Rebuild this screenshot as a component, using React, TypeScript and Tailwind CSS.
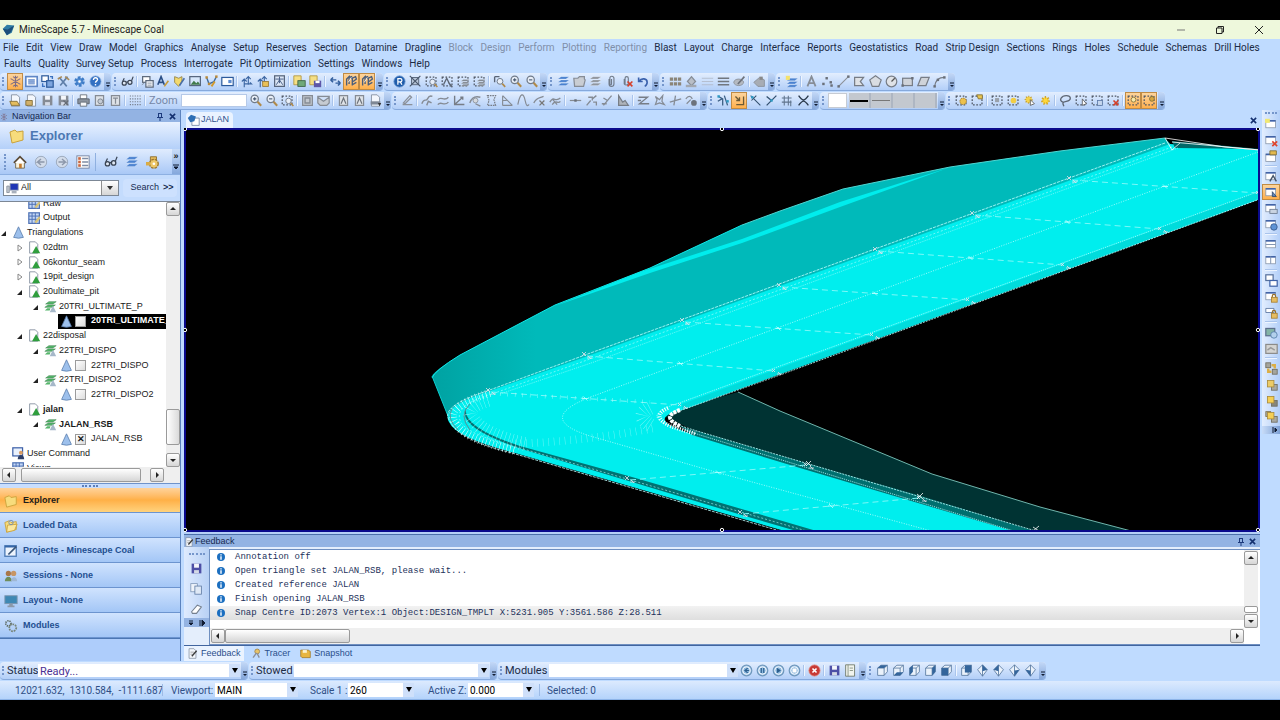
import { useState } from "react";
import type { ReactNode } from "react";

const NAVY = "#2c5a9c";
const GREY = "#868c95";

const windowFrame = (
  <>
    <rect x="1" y="3" width="12" height="9" fill="#fff" stroke="#8a97ab" />
    <path d="M1 3.5h12" stroke="#3f63a8" strokeWidth="2" />
  </>
);
const sheet = (
  <path d="M3 1h7l3 3v11H3z" fill="#f4f7fc" stroke="#7a8698" />
);
const greySheet = (
  <path d="M3 2h10v12H3z" fill="#dfe3e8" stroke={GREY} strokeWidth="1.5" />
);
const marquee = (
  <rect
    x="1.5"
    y="2.5"
    width="12"
    height="11"
    fill="none"
    stroke="#4d5563"
    strokeWidth="1.5"
    strokeDasharray="2 2"
  />
);
const lens = (
  <>
    <circle cx="7" cy="6" r="4.5" fill="#e8eef7" stroke="#6f7a8a" strokeWidth="1.5" />
    <path d="M10.500 9.500l4.500 5" stroke="#b08a4a" strokeWidth="2.500" />
  </>
);
const folder = (
  <path d="M1 4l5-2 2 2 6-1v9l-11 3z" fill="#f7dc7c" stroke="#c9a23c" />
);
const floppy = (color: string) => (
  <>
    <path d="M2 2h12v12H2z" fill={color} />
    <path d="M5 2h6v5H5z" fill="#f5f7fb" />
    <path d="M5 10h6v4H5z" fill="#d4dae6" />
  </>
);
const cube = (
  <path
    d="M2 5l4-3.500h8v8L10 14H2zM2 5h8v9M10 5l4-3.500"
    fill="#eaf2fb"
    stroke="#54759c"
  />
);
const diamond = (
  <path d="M8 1l6 6-6 8-6-8zM8 1v14" fill="#eaf2fb" stroke="#54759c" />
);
const disc = (color: string) => (
  <>
    <circle cx="8" cy="8" r="6.500" fill="#b7d3ee" stroke={color} strokeWidth="1.500" />
    <circle cx="8" cy="8" r="4.500" fill="#8db8de" stroke="#fff" />
  </>
);
const stack = (color: string) => (
  <>
    <path d="M1 13l4-3h10l-4 3zM1 9l4-3h10l-4 3zM1 5l4-3h10l-4 3z" fill={color} stroke="#fff" strokeWidth=".3" />
  </>
);
const padlock = (
  <>
    <path d="M9 9V7.500a2 2 0 014 0V9" fill="none" stroke="#97712c" strokeWidth="1.500" />
    <rect x="8" y="9" width="7" height="6" fill="#e6bd61" stroke="#a67e2e" />
  </>
);
const line = (d: string, color = GREY, width = 1.7) => (
  <path d={d} fill="none" stroke={color} strokeWidth={width} />
);
const nodes = (points: number[][], color = "#6a7079") =>
  points.map(([x, y]) => (
    <rect key={`${x}-${y}`} x={x - 1.5} y={y - 1.5} width="3" height="3" fill={color} />
  ));
const squares = (front: string, back: string, both = false) => (
  <>
    {both && <rect x="1" y="2" width="6" height="6" fill={back} stroke="#7d7049" />}
    <rect x="8" y="8" width="7" height="7" fill={back} stroke="#6d6a5c" />
    <rect x="3" y="3" width="8" height="8" fill={front} stroke="#a88a3a" />
  </>
);

const icons: Record<string, ReactNode> = {
  snow: line("M8 1v14M2 4.500l12 7M14 4.500l-12 7M5 2l3 2 3-2M5 14l3-2 3 2", "#7d6c86", 1.3),
  panel: (
    <>
      <rect x="1" y="2" width="14" height="12" fill="#fff" stroke="#5f86c6" strokeWidth="2" />
      <path d="M4 5h8v6H4z" fill="#9bb7e3" />
      <path d="M4 6h8M4 8.500h8M4 11h8" stroke="#6c8cc4" />
    </>
  ),
  windows: (
    <>
      <rect x="1" y="1" width="8" height="7" fill="#fff" stroke={NAVY} strokeWidth="1.500" />
      <rect x="7" y="7" width="8" height="8" fill="#7da5df" stroke={NAVY} strokeWidth="1.500" />
      {line("M11 2h3v3M2 10v4h3", "#3b72c0")}
    </>
  ),
  tools: (
    <>
      {line("M3 3l9 11M13 2L4 13", "#5f7fa9", 2)}
      {line("M1 5l5-3M10 2l5 4", "#a78a5a", 2)}
    </>
  ),
  gear: (
    <>
      <circle cx="8" cy="8" r="4.500" fill="#5b93d6" stroke="#3f7cc6" strokeWidth="4" strokeDasharray="3 1.700" />
      <circle cx="8" cy="8" r="1.500" fill="#fff" />
    </>
  ),
  help: (
    <>
      <circle cx="8" cy="8" r="7" fill="#3370c2" stroke="#a9c4e8" />
      {line("M5.500 6c0-4 5-3 5-.500 0 2-2.500 2-2.500 4M8 11v2", "#fff")}
    </>
  ),
  glasses: (
    <>
      <circle cx="4" cy="10" r="2.500" fill="#dfe8f4" stroke="#3a4454" strokeWidth="1.500" />
      <circle cx="11" cy="9" r="2.500" fill="#dfe8f4" stroke="#3a4454" strokeWidth="1.500" />
      {line("M2 8l2-4M13 7l2-5M6.500 9l2-.500", "#3a4454", 1.4)}
    </>
  ),
  props: (
    <>
      <rect x="2" y="2" width="9" height="7" fill="#fff" stroke="#5d6a7c" strokeWidth="1.500" />
      <path d="M6 7h9v8H6z" fill="#f5f7fb" stroke="#5d6a7c" strokeWidth="1.500" />
      {line("M8 10h5M8 12.500h5M1 12l3-2", "#7d8896", 1)}
    </>
  ),
  textA: (
    <>
      {line("M1 12L5 2l4 10M2.500 9h5", "#2b4f86", 2)}
      {line("M9 14l5-7", "#c99c37", 2)}
    </>
  ),
  shieldPen: (
    <>
      <path d="M2 2l5 2 4-2v6l-4 6-5-5z" fill="#f3d96d" stroke="#8e7d3d" />
      {line("M8 13l6-9", "#4b6fa5", 2)}
    </>
  ),
  image: (
    <>
      <rect x="1" y="2" width="13" height="11" fill="#d7e7fb" stroke="#55667e" strokeWidth="1.500" />
      <path d="M2 12l4-5 3 3 2-2 3 4z" fill="#417a4b" />
    </>
  ),
  polyPen: (
    <>
      {line("M2 3l3 8 6-3 3-6", "#3f6c9e")}
      {line("M8 14l4-6", "#d39a2c", 2.4)}
      {nodes([[2, 3], [5, 11], [14, 2]], "#b98a3a")}
    </>
  ),
  dock: (
    <>
      <rect x="1" y="3" width="14" height="10" fill="#fff" stroke={NAVY} strokeWidth="1.500" />
      <path d="M9 6h4v4H9z" fill="#5c8bd0" />
    </>
  ),
  flow: line("M4 15V5M1 8l3-3 3 3M9 12V2M6 5l3-3 3 3M4 11h9l-2-2", "#3d67a3", 1.4),
  flowGold: (
    <>
      {line("M4 15V5M1 8l3-3 3 3M9 8V2M6 5l3-3 3 3", "#3d67a3", 1.4)}
      <rect x="7" y="8" width="7" height="6" fill="#e9c058" stroke="#96732b" />
    </>
  ),
  mapTool: (
    <>
      <rect x="2" y="1" width="12" height="13" fill="#dbe6f5" stroke="#56647b" strokeWidth="1.500" />
      {line("M3 5h10M4 12l4-6 4 6M8 2v8", "#4c6289", 1.2)}
    </>
  ),
  folderView: (
    <>
      <path d="M1 1h9v11H1z" fill="#f5df85" stroke="#af913a" />
      <rect x="6" y="7" width="9" height="7" fill="#6fa97a" stroke="#345b3d" />
    </>
  ),
  folderSave: (
    <>
      <path d="M1 1h9v11H1z" fill="#f5df85" stroke="#af913a" />
      <rect x="6" y="7" width="9" height="8" fill="#5d57a8" />
      <path d="M8 7h5v3H8z" fill="#fff" />
    </>
  ),
  swap: line("M2 6h7M2 6l3-3M2 6l3 3M14 10H8M14 10l-3-3M14 10l-3 3", "#335f9d", 1.8),
  snapPen: (
    <>
      {line("M2 13V5l3-3v9M5 3l3-1v3M9 13V4l4-2 1 3-4 3M9 12l5-3", "#4a5e7c", 1.7)}
      {line("M4 9l4-6", "#fff", 1)}
    </>
  ),
  badgeR: (
    <>
      <circle cx="8" cy="8" r="7" fill="#1f5cab" stroke="#7ea6da" />
      {line("M6 12V4.500h3a2 2 0 010 4H6M9 8.500l2 3.500", "#fff", 1.5)}
    </>
  ),
  fit: (
    <>
      <rect x="3" y="3" width="9" height="9" fill="#b9c6d8" stroke="#48566b" />
      {line("M1 1l13 13M14 1L1 14", "#48566b", 1.4)}
    </>
  ),
  zoomArea: (
    <>
      {marquee}
      <g transform="translate(4 4) scale(.75)">{lens}</g>
    </>
  ),
  zoomPoly: (
    <>
      {marquee}
      {line("M3 12l4-8 4 8M9 9l5 6", "#5d6674")}
    </>
  ),
  areaStack: (
    <>
      {marquee}
      <g transform="translate(4 4) scale(.75)">{stack("#7f8690")}</g>
    </>
  ),
  zoomPick: (
    <>
      {line("M2 2v7M2 2h6", "#596476")}
      <g transform="translate(3 3) scale(.8)">{lens}</g>
    </>
  ),
  zoomIn: <>{lens}{line("M7 4v4M5 6h4", "#43546c", 1.3)}</>,
  zoomOut: <>{lens}{line("M5 6h4", "#43546c", 1.3)}</>,
  layers: stack("#4a82d0"),
  layersGrey: stack("#8f959e"),
  folderGrey: (
    <path d="M1 4h5l2-2h6v3l1 1-2 8H2z" fill="#c9cdd3" stroke={GREY} strokeWidth="1.500" />
  ),
  clip: line("M5 5v6a3 3 0 006 0V4a2.500 2.500 0 00-5 0v7a1 1 0 002 0V5", "#707a89", 1.4),
  clipDel: (
    <>
      {line("M4 5v6a3 3 0 005 0V4a2 2 0 00-4 0v7", "#707a89", 1.4)}
      {line("M8 8l6 6M14 8l-6 6", "#d5402b", 2)}
    </>
  ),
  undo: line("M2 3v5h5M2.500 8c3-5 10-4 10 1 0 2-1 4-3 5", "#3b62ad", 2),
  palette: (
    <path
      d="M1 3h4v4H1zM6 3h4v4H6zM11 3h4v4h-4zM1 9h4v4H1zM6 9h4v4H6zM11 9h4v4h-4z"
      fill="#8b8578"
    />
  ),
  bucket: (
    <>
      <path d="M3 8l5-6 5 6-5 5z" fill="#b9bec6" stroke={GREY} strokeWidth="1.500" />
      <path d="M1 12h13v3H1z" fill="#a3a8b0" />
    </>
  ),
  hatch: line("M1 4h14M1 8h14M1 12h14", "#b0b8c6", 1),
  lineWidths: line("M1 4h14M1 8h14M1 12h14", "#71777f", 2),
  brush: (
    <>
      <ellipse cx="7" cy="9" rx="6" ry="4" fill="#b4b9c1" stroke={GREY} />
      {line("M6 11l8-9", "#6d727b", 2)}
    </>
  ),
  shapes: (
    <>
      <path d="M1 9l7-6 6 3v8H6z" fill="#a7acb4" stroke={GREY} />
      <path d="M8 2h4v4H8z" fill="#888" />
    </>
  ),
  newLayer: (
    <>
      <g transform="translate(1 2)">{stack("#4a82d0")}</g>
      <path d="M1 1h5v5H1z" fill="#f5e26b" />
    </>
  ),
  letterA: line("M3 14L8 2l5 12M5 10h6", "#878d96", 2.2),
  points: nodes([[3, 11], [7, 4], [12, 9], [13, 13]]),
  segment: <>{line("M2 14L14 2", "#8b9098", 1.4)}{nodes([[2, 14], [14, 2]])}</>,
  openPoly: <path d="M2 3h11L9 8l4 5H2z" fill="#dfe2e6" stroke="#777d86" strokeWidth="1.500" />,
  pentagon: <path d="M8 1l7 5-3 8H4L1 6z" fill="#d9dde2" stroke="#777d86" strokeWidth="1.500" />,
  circle: (
    <>
      <circle cx="8" cy="8" r="6.500" fill="#dfe2e6" stroke="#777d86" strokeWidth="1.500" />
      {line("M8 8l4-4", "#555", 1.5)}
    </>
  ),
  rect: <><rect x="2" y="4" width="12" height="9" fill="#cfd3d9" stroke="#777d86" strokeWidth="1.500" />{nodes([[2, 13], [14, 4]])}</>,
  skew: <path d="M5 3h10l-4 10H1z" fill="#cfd3d9" stroke="#777d86" strokeWidth="1.500" />,
  arc: <>{line("M2 14C3 7 7 3 14 3", "#777d86", 1.5)}{nodes([[2, 14], [6, 6], [14, 3]])}</>,
  open: (
    <>
      {sheet}
      <path d="M1 9h9l3 5H3z" fill="#e4bd5e" stroke="#7d672f" />
    </>
  ),
  openAll: (
    <>
      {sheet}
      <path d="M1 8h8v6H1z" fill="#d1b06a" stroke="#7d672f" />
    </>
  ),
  saveGrey: floppy("#858b95"),
  saveXGrey: <>{floppy("#858b95")}{line("M8 8l6 6M14 8l-6 6", "#666c76", 1.5)}</>,
  print: (
    <>
      <path d="M4 1h8v5H4z" fill="#fff" stroke="#5e6670" />
      <path d="M1 6h14v6H1z" fill="#8b939e" stroke="#555c66" />
      <path d="M4 10h8v5H4z" fill="#f5f6f8" stroke="#5e6670" />
    </>
  ),
  preview: <>{greySheet}<circle cx="9" cy="9" r="3" fill="#c5ccd6" stroke="#6f7680" /></>,
  page: <>{greySheet}{line("M5 5h6M8 5v7", GREY, 1.5)}</>,
  dots: (
    <path
      d="M1 2.500h14M1 6h14M1 9.500h14M1 13h14"
      stroke="#737b88"
      strokeWidth="1.400"
      strokeDasharray="1.400 1.600"
    />
  ),
  pageIn: <><path d="M2 2h12v12H2z" fill="#c3c8cf" stroke={GREY} strokeWidth="1.500" />{line("M5 5h6v6H5z")}</>,
  mail: <path d="M1 3h14v8l-3 3H4l-3-3zM1 4l7 5 7-5" fill="#c6cbd2" stroke={GREY} strokeWidth="1.500" />,
  pageA: <>{greySheet}{line("M5 12l3-7 3 7", "#6d737c", 1.5)}</>,
  printDown: <>{sheet}<path d="M2 9h12v4H2z" fill="#7e8794" /><path d="M11 11h4l-2 4z" fill="#333" /></>,
  pencil: line("M2 13h12M3 11l8-9 2 2-8 8z", "#8b919a", 1.6),
  curvePen: line("M1 12c3-8 5-2 7-6s4-4 6-3M7 14l2-5 4 2", "#858b94", 1.7),
  waves: line("M1 7c4-5 8 3 13-3M1 13c4-5 8 3 13-3", "#858b94", 1.7),
  axes: line("M2 2v11h12M3 12L12 4M9 4h3v3", "#777d86", 1.7),
  curveLens: <>{line("M1 11c2-6 6-9 13-7M8 12l6 3", "#858b94", 1.7)}<circle cx="8" cy="8" r="3" fill="#d5d9df" stroke={GREY} /></>,
  boundary: <path d="M3 2h10l-2 5 2 7H3l2-6z" fill="none" stroke="#777d86" strokeWidth="1.500" strokeDasharray="2 1" />,
  slope: line("M2 14V2M2 2l12 12M2 14h12M2 8h5", "#858b94", 1.4),
  wave: line("M1 13C4-2 8-2 10 8s4 5 5 5", "#858b94", 1.5),
  curveX: <>{line("M1 11c3-7 7-6 12-8", "#858b94", 1.6)}{line("M8 8l6 6M14 8l-6 6", "#777", 1.6)}</>,
  leaf: line("M1 10c5-9 6 1 13-5M4 13c4-7 7 0 10-4M4 6l6 7", "#858b94", 1.6),
  node: <>{line("M1 8h14", "#858b94", 1.5)}{nodes([[8, 8]])}</>,
  split: line("M2 14l5-6M9 6l5-4M4 4h5v4M10 10h4v4", "#858b94", 1.6),
  branch: line("M3 14L13 2M3 5l5 3M1 12h6", "#858b94", 1.6),
  hill: <path d="M2 2v12h12l-4-6-3 2z" fill="#aeb3ba" stroke="#777d86" strokeWidth="1.500" />,
  zed: line("M2 4h11L3 12h12M1 8h4", "#777d86", 1.6),
  star: line("M3 3l5 4 4-5-1 7 3 4-6-2-5 2 2-6z", "#858b94", 1.5),
  cross: line("M1 10l14-4M8 2L6 14", "#858b94", 1.6),
  ball: <>{line("M1 6c3-4 6-4 8 0M2 12l5-5", "#858b94", 1.5)}<circle cx="11" cy="11" r="3.500" fill="#6c727b" /></>,
  snapGrid: <>{line("M2 3l5 3v8M9 2l4 12M1 9l5-3", "#3c5f84", 1.6)}{nodes([[2, 3], [13, 9]], "#2f9ac4")}</>,
  snapCorner: line("M3 3l5 5M4 13h9V3M8 4v4H4", "#6b5a35", 1.6),
  snapLine: <>{line("M2 2l12 12M9 2l-6 6", "#33506f", 1.3)}{nodes([[4, 4]], "#2f9ac4")}</>,
  snapMid: <>{line("M2 14L14 2M2 3l6 5", "#33506f", 1.6)}{nodes([[8, 8]], "#2f9ac4")}</>,
  snapHash: line("M4 2v12M9 2v12M1 5h12M1 10h12M12 8v7", "#60748d", 1.3),
  snapX: line("M2 2c5 7 7 7 12 0M2 14c5-7 7-7 12 0", "#2b3a4c", 1.7),
  selGear: <>{marquee}<circle cx="10" cy="9" r="4" fill="#ecc14e" stroke="#96722a" strokeDasharray="2 1" /></>,
  selProps: <>{marquee}<path d="M7 1h7v5H9z" fill="#e9c550" stroke="#7a6a34" /></>,
  selCentre: <>{marquee}<rect x="5" y="5" width="5" height="5" fill="#9aa1ab" /></>,
  selGold: <>{marquee}<circle cx="8" cy="8" r="3.500" fill="#f2cd44" /></>,
  sunPick: <><circle cx="7" cy="7" r="4" fill="#f5d34a" stroke="#b9922e" strokeWidth="2" strokeDasharray="1 2" /><path d="M9 7l5 5-5 2z" fill="#fff" stroke="#555" /></>,
  sun: <><circle cx="8" cy="8" r="4" fill="#ffd83a" stroke="#d0a224" strokeWidth="3" strokeDasharray="1.500 2" /></>,
  lasso: line("M5 10C-1 8 3 2 9 2s7 6 0 7c-5 1-5 2-3 6", "#5d6674", 1.7),
  selPick: <>{marquee}<path d="M9 6l5 6-5 2z" fill="#fff" stroke="#555" /></>,
  selCopy: <>{marquee}<rect x="8" y="8" width="6" height="6" fill="#c5d6ee" stroke="#5b79a8" /></>,
  selDel: <>{marquee}{line("M8 8l6 6M14 8l-6 6", "#d5402b", 2)}</>,
  selSun: <>{marquee}<circle cx="8" cy="7" r="3" fill="#f8e8a8" stroke="#7a6a34" /></>,
  selMove: <>{marquee}<circle cx="11" cy="6" r="3" fill="#d8a640" stroke="#7a6a34" /></>,
  winNew: <>{windowFrame}<path d="M0 1h6v5H0z" fill="#f1e873" /></>,
  winDel: <>{windowFrame}{line("M9 9l6 6M15 9l-6 6", "#e0442c", 2)}</>,
  winProps: <><g transform="translate(0 2)">{windowFrame}</g><path d="M6 1h8v5H6z" fill="#e2b94f" stroke="#7a6a34" /></>,
  winText: <>{windowFrame}{line("M6 14l4-7 4 7", "#44546b", 1.8)}</>,
  winPick: <>{windowFrame}<path d="M9 7l5 6h-5z" fill="#5b86bb" stroke="#2c4568" /></>,
  winEdit: <>{windowFrame}<rect x="6" y="9" width="9" height="5" fill="#c9d4e2" stroke="#68778c" /></>,
  winGlobe: <>{windowFrame}<circle cx="11" cy="11" r="4" fill="#5f93d4" stroke="#35588b" /></>,
  winH: <>{windowFrame}{line("M1 8h12", "#7f92b0", 1.2)}</>,
  winV: <>{windowFrame}{line("M7 3v9", "#7f92b0", 1.2)}</>,
  winCopy: <><rect x="1" y="1" width="9" height="7" fill="#fff" stroke="#55709c" strokeWidth="1.500" /><rect x="6" y="8" width="9" height="7" fill="#fff" stroke="#3f63a8" strokeWidth="1.500" /></>,
  winLock: <>{windowFrame}{padlock}</>,
  winLock2: <><path d="M1 3h10v5H1z" fill="#fff" stroke="#55709c" />{padlock}</>,
  winPhoto: <><rect x="1" y="3" width="11" height="9" fill="#83b3a6" stroke="#5d6f8c" strokeWidth="1.500" /><circle cx="11" cy="11" r="4" fill="#b2d0ec" stroke="#537ba8" /></>,
  winGrey: <><rect x="1" y="3" width="14" height="11" fill="#d4d4d2" stroke="#8b8b8a" strokeWidth="1.500" />{line("M3 10l4-3 5 3", "#999")}</>,
  toBack: (
    <>
      <rect x="1" y="1" width="6" height="6" fill="#a5a59d" stroke="#6d6a5c" />
      <rect x="9" y="9" width="6" height="6" fill="#a5a59d" stroke="#6d6a5c" />
      <path d="M8 4h4v4M4 8v4h4" fill="none" stroke="#dcae45" strokeWidth="3" />
    </>
  ),
  backward: squares("#eccb66", "#a9a9a2"),
  forward: squares("#f5cf54", "#87867c"),
  toFront: squares("#f5cf54", "#a9a9a2", true),
  save: floppy("#4d4fa6"),
  copy: (
    <>
      <rect x="1" y="2" width="8" height="10" fill="#eef3fa" stroke="#7f97b8" />
      <rect x="6" y="5" width="8" height="10" fill="#dfe9f6" stroke="#5f7ba3" />
    </>
  ),
  eraser: <path d="M2 12l7-8 5 2-6 8H3z" fill="#fff" stroke="#75808f" strokeWidth="1.300" />,
  home: (
    <>
      <path d="M3 8h10v7H3z" fill="#f7f2df" stroke="#6d6147" />
      <path d="M1 9l7-7 7 7" fill="#fff" stroke="#5b4a35" strokeWidth="2" />
      <path d="M7 10h3v5H7z" fill="#c47a2c" />
    </>
  ),
  back: <><circle cx="8" cy="8" r="6.500" fill="#d3dcea" stroke="#97a3b6" />{line("M12 8H4l4-3.500M4 8l4 3.500", "#8c97aa", 1.6)}</>,
  forwardNav: <><circle cx="8" cy="8" r="6.500" fill="#d3dcea" stroke="#97a3b6" />{line("M4 8h8L8 4.500M12 8l-4 3.500", "#8c97aa", 1.6)}</>,
  list: (
    <>
      <rect x="1" y="1" width="14" height="14" fill="#fff" stroke="#6c7d9c" />
      {line("M7 4h7M7 8h7M7 12h7", "#7f8da5", 1.5)}
      {nodes([[4, 4], [4, 8], [4, 12]], "#c8663f")}
    </>
  ),
  goldGear: (
    <>
      <path d="M5 2h7v5H5z" fill="#e5bc5c" stroke="#8c6c2a" />
      <circle cx="9" cy="10" r="5" fill="#edc768" stroke="#9a762e" strokeWidth="1.500" strokeDasharray="3 1" />
      <circle cx="9" cy="10" r="1.500" fill="#fff" />
      <path d="M0 8h5v4H0z" fill="#d9ab46" />
    </>
  ),
  folder,
  folderOpen: <>{folder}<path d="M4 7l11-1-3 7-9 2z" fill="#fbe89f" stroke="#c9a23c" /><circle cx="8" cy="4" r="2.500" fill="none" stroke="#6f8db5" /></>,
  project: <><rect x="1" y="2" width="13" height="12" fill="#edf4fd" stroke="#4a78b4" strokeWidth="1.500" /><path d="M1 3h13" stroke="#3566a8" strokeWidth="2" />{line("M5 12l9-9", "#3a5578", 2)}</>,
  people: (
    <>
      <circle cx="5" cy="5" r="3" fill="#a9774a" />
      <circle cx="11" cy="5" r="3" fill="#c79565" />
      <path d="M1 14c0-7 8-7 8 0z" fill="#6f8d5b" />
      <path d="M8 14c0-6 7-6 7 0z" fill="#9fb7d4" />
    </>
  ),
  monitor: <><rect x="1" y="2" width="14" height="9" fill="#3e88b4" stroke="#7c94ad" /><path d="M6 11h4v3H6zM4 13h8v2H4z" fill="#8b98a8" /></>,
  cogs: (
    <>
      <circle cx="5" cy="5" r="3" fill="none" stroke="#5f6d66" strokeWidth="2" strokeDasharray="1.500 1" />
      <circle cx="10" cy="10" r="4" fill="none" stroke="#77857a" strokeWidth="2" strokeDasharray="2 1" />
    </>
  ),
  grid: (
    <>
      <rect x="1" y="1" width="13" height="13" fill="#c4d7f5" stroke="#4f72b5" strokeWidth="1.500" />
      {line("M1 5h13M1 9h13M5 1v13M9 1v13", "#4f72b5", 1.2)}
      <path d="M8 12l6-7 1 3-5 6z" fill="#d8c478" />
    </>
  ),
  cone: <path d="M8 1l6 13q-6 2-12 0z" fill="#9dc0ec" stroke="#5b7fae" />,
  triFile: <><path d="M2 1h7l3 3v11H2z" fill="#fff" stroke="#7a8698" /><path d="M10 6l5 9H5z" fill="#2f9e3d" /></>,
  triLayers: <><path d="M2 5l4-3h9l-4 3zM1 9l4-3h9l-4 3z" fill="#55b56b" stroke="#2f7a42" strokeWidth=".6" /><path d="M1 13l3-3h4l-1 3z" fill="#55b56b" /><path d="M11 7l4 8H7z" fill="#a6b8c9" /></>,
  user: <><rect x="1" y="1" width="12" height="10" fill="#e9f1fd" stroke="#3c5fa8" strokeWidth="1.500" /><circle cx="11" cy="7" r="2.500" fill="#d99c62" /><path d="M7 15c0-7 8-7 8 0z" fill="#2d3d66" /></>,
  pc: <><rect x="5" y="2" width="10" height="8" fill="#1f36b5" stroke="#95a0b0" /><path d="M7 11h6v3H7z" fill="#a8b0bd" /><path d="M1 5h3v8H1z" fill="#c5cad2" stroke="#838b97" /></>,
  note: <>{sheet}{line("M5 6h5M5 9h3", "#888", 1)}{line("M7 12l7-8", "#3c3c3c", 2)}</>,
  tracer: <><circle cx="9" cy="5" r="3.500" fill="#e7c36a" stroke="#967634" />{line("M3 14l5-7M9 8l3 6", "#8a8f99", 2)}</>,
  snapshot: <><path d="M1 3h11l3 2v9H3l-2-2z" fill="#e8b640" stroke="#9a7220" /><path d="M4 3h6v4H4z" fill="#fdf3cd" /></>,
  mine: <><path d="M1 7l5-5 9 1-3 9-6 3z" fill="#2f7da6" /><path d="M1 7l6 1 8-5-4 8-5 4z" fill="#1c4f7a" /></>,
  tabIcon: <><path d="M6 5h9v9H6z" fill="#fff" stroke="#6f83a3" /><path d="M1 5l4-4 6 2-2 6-5 1z" fill="#2d6fb5" /></>,
  prev: <>{disc("#6f98bd")}{line("M9.500 5L6 8l3.500 3M6 8h5", "#2c5f8e", 1.4)}</>,
  pause: <>{disc("#6f98bd")}{line("M6.500 5v6M9.500 5v6", "#2c5f8e", 1.4)}</>,
  play: <>{disc("#6f98bd")}<path d="M6 4.500l5 3.500-5 3.500z" fill="#2c5f8e" /></>,
  stop: <>{disc("#6f98bd")}<path d="M5.500 5.500h5v5h-5z" fill="#fff" /></>,
  abort: <><circle cx="8" cy="8" r="7" fill="#c83a35" stroke="#e4a29d" />{line("M5.500 5.500l5 5M10.500 5.500l-5 5", "#fff", 2)}</>,
  log: <><path d="M2 1h11v14H2z" fill="#f1f4ee" stroke="#66705f" />{line("M5 1v14M7 5h4M7 8h4", "#7d8776", 1)}</>,
  cubeTop: <>{cube}<path d="M2 5l4-3.500h8L10 5z" fill="#34659b" /></>,
  cubeBottom: <>{cube}<path d="M2 14l4-4h8l-4 4z" fill="#34659b" /></>,
  cubeLeft: <>{cube}<path d="M2 5l4-3.500v8L2 14z" fill="#34659b" /></>,
  cubeRight: <>{cube}<path d="M10 5l4-3.500v8L10 14z" fill="#34659b" /></>,
  cubeFront: <>{cube}<path d="M2 5h8v9H2z" fill="#34659b" /></>,
  cubeBack: <>{cube}<path d="M6 1.500h8v9H6z" fill="#34659b" /></>,
  isoNE: <>{diamond}<path d="M8 1l6 6-6 2z" fill="#34659b" /></>,
  isoNW: <>{diamond}<path d="M8 1L2 7l6 2z" fill="#34659b" /></>,
  isoSE: <>{diamond}<path d="M8 15l6-8-6 1z" fill="#34659b" /></>,
  isoSW: <>{diamond}<path d="M8 15L2 7l6 1z" fill="#34659b" /></>,
};

const Icon = ({ name, className = "size-[13px]" }: { name: string; className?: string }) => (
  <svg viewBox="0 0 16 16" className={`shrink-0 ${className}`} aria-hidden="true">
    {icons[name]}
  </svg>
);

const Grip = () => (
  <span className="my-1 ml-[2px] mr-[3px] w-[2px] shrink-0 border-l-2 border-dotted border-[#7596cb]" />
);

const Overflow = () => (
  <button
    aria-label="Toolbar options"
    className="ml-px flex w-[7px] shrink-0 items-end justify-center rounded-r-sm bg-linear-to-b from-[#c3d8f7] to-[#86a8db] pb-[2px]"
  >
    <svg viewBox="0 0 6 6" className="size-[6px]">
      <path d="M1 1h4" stroke="#111c33" />
      <path d="M1 3h4L3 5z" fill="#111c33" />
    </svg>
  </button>
);

// "|" is a separator and a leading "*" marks a pressed button
const Tools = ({ items }: { items: string }) => (
  <>
    {items.split(" ").map((item, i) => {
      if (item === "|")
        return <span key={i} className="mx-[1px] my-[3px] w-[2px] shrink-0 border-l border-[#a9c4ec] bg-[#eef5ff]" />;
      const active = item.startsWith("*");
      const name = item.replace("*", "");
      return (
        <button
          key={i}
          aria-label={name}
          aria-pressed={active}
          className={`flex w-4 shrink-0 items-center justify-center hover:bg-[#ffe0a0] ${
            active ? "border border-[#c08b45] bg-linear-to-b from-[#fcd49c] to-[#ffb04a]" : ""
          }`}
        >
          <Icon name={name} />
        </button>
      );
    })}
  </>
);

const Toolbar = ({ children }: { children: ReactNode }) => (
  <div className="flex h-[18px] shrink-0 rounded-sm border-b border-[#86a9dc] bg-linear-to-b from-[#e3eefe] to-[#b3cff8]">
    <Grip />
    {children}
    <Overflow />
  </div>
);

const Combo = ({
  label,
  options,
  className,
}: {
  label: string;
  options: string[];
  className: string;
}) => (
  <span className={`relative flex shrink-0 items-stretch bg-white ${className}`}>
    <select aria-label={label} className="w-full appearance-none pl-[2px] pr-3 outline-none">
      {options.map((option) => (
        <option key={option}>{option}</option>
      ))}
    </select>
    <span className="pointer-events-none absolute inset-y-0 right-0 flex w-[11px] items-center justify-center bg-[#cfe0fa]">
      <svg viewBox="0 0 8 6" className="h-[6px] w-2">
        <path d="M1 0h6L4 5z" fill="#000" />
      </svg>
    </span>
  </span>
);

const arrows = {
  up: "M1 5l3-3 3 3z",
  down: "M1 3h6L4 6z",
  left: "M5 1v6L2 4z",
  right: "M3 1v6l3-3z",
};

const ScrollButton = ({ dir }: { dir: keyof typeof arrows }) => (
  <button
    aria-label={`Scroll ${dir}`}
    className="flex size-[14px] shrink-0 items-center justify-center rounded-xs border border-[#9a9a9a] bg-linear-to-b from-white to-[#d6d6d6]"
  >
    <svg viewBox="0 0 8 8" className="size-2">
      <path d={arrows[dir]} fill="#222" />
    </svg>
  </button>
);

const PanelButtons = () => (
  <>
    <button aria-label="Pin" className="ml-auto">
      <svg viewBox="0 0 8 8" className="size-2">
        <path d="M2.500 0v4M5.500 0v4M2 .500h4M1 4.500h6M4 5v3" stroke="#1d3a7c" fill="none" />
      </svg>
    </button>
    <button aria-label="Close">
      <svg viewBox="0 0 8 8" className="size-[7px]">
        <path d="M1 1l6 6M7 1L1 7" stroke="#14306f" strokeWidth="1.800" />
      </svg>
    </button>
  </>
);

const menuTop =
  "File,Edit,View,Draw,Model,Graphics,Analyse,Setup,Reserves,Section,Datamine,Dragline,Block,Design,Perform,Plotting,Reporting,Blast,Layout,Charge,Interface,Reports,Geostatistics,Road,Strip Design,Sections,Rings,Holes,Schedule,Schemas,Drill Holes".split(
    ","
  );
const menuBottom =
  "Faults,Quality,Survey Setup,Process,Interrogate,Pit Optimization,Settings,Windows,Help".split(",");
const disabledMenus = ["Block", "Design", "Perform", "Plotting", "Reporting"];

const MenuBar = () => (
  <nav className="h-[34px] pt-px text-[10px] leading-4 text-[#1c2b45]">
    <div className="flex justify-between pl-[3px] pr-5">
      {menuTop.map((item) => (
        <button
          key={item}
          disabled={disabledMenus.includes(item)}
          className="whitespace-nowrap disabled:text-[#7f8fa9]"
        >
          {item}
        </button>
      ))}
    </div>
    <div className="flex gap-[7px] pl-1">
      {menuBottom.map((item) => (
        <button key={item} className="whitespace-nowrap">
          {item}
        </button>
      ))}
    </div>
  </nav>
);

const Toolbars = () => (
  <>
    <div className="mb-px flex gap-px">
      <Toolbar>
        <Tools items="*snow panel windows tools gear help" />
      </Toolbar>
      <Toolbar>
        <Tools items="glasses | props textA shieldPen image polyPen dock | flow flowGold mapTool | folderView folderSave | swap *snapPen *snapPen" />
      </Toolbar>
      <Toolbar>
        <Tools items="badgeR fit zoomArea zoomPoly areaStack areaStack | zoomPick zoomIn zoomOut" />
      </Toolbar>
      <Toolbar>
        <Tools items="layers folderGrey layersGrey clip clipDel undo" />
      </Toolbar>
      <Toolbar>
        <Tools items="palette bucket hatch lineWidths brush | shapes" />
      </Toolbar>
      <Toolbar>
        <Tools items="newLayer | letterA points segment openPoly pentagon circle rect skew arc" />
      </Toolbar>
    </div>
    <div className="flex gap-px">
      <Toolbar>
        <Tools items="open openAll saveGrey saveXGrey | print preview page | dots |" />
        <label htmlFor="zoom" className="w-[34px] shrink-0 pl-[2px] text-[11px] leading-[17px] text-[#7688a8]">
          Zoom
        </label>
        <input id="zoom" className="my-[2px] w-[66px] border border-[#b5c9e8] bg-white px-1 text-[10px]" />
        <Tools items="zoomIn zoomOut zoomArea | pageIn mail | pageA pageA printDown" />
      </Toolbar>
      <Toolbar>
        <Tools items="pencil | curvePen waves axes curveLens boundary slope wave curveX leaf | node split branch hill | zed star cross ball" />
      </Toolbar>
      <Toolbar>
        <Tools items="snapGrid *snapCorner snapLine snapMid snapHash snapX" />
      </Toolbar>
      <Toolbar>
        <button aria-label="Fill colour" className="my-px ml-px mr-[2px] w-[19px] shrink-0 border border-[#c6cbd3] bg-white" />
        {["h-[2px] bg-black", "h-px bg-[#777]", "", ""].map((stroke, i) => (
          <button
            key={i}
            aria-label={`Line style ${i + 1}`}
            className="my-px flex w-[22px] shrink-0 items-center border-r-2 border-[#aeb6c2] bg-[#c3c8cf] px-px"
          >
            <span className={`w-full ${stroke}`} />
          </button>
        ))}
      </Toolbar>
      <Toolbar>
        <Tools items="selGear selProps | selCentre selGold sunPick sun | lasso selPick selCopy selDel | *selSun *selMove" />
      </Toolbar>
    </div>
  </>
);

type Node = {
  label: string;
  depth: number;
  icon: string;
  state?: "open" | "closed";
  bold?: boolean;
  selected?: boolean;
  check?: boolean;
};

const tree: Node[] = [
  { label: "Raw", depth: 1, icon: "grid" },
  { label: "Output", depth: 1, icon: "grid" },
  { label: "Triangulations", depth: 0, icon: "cone", state: "open" },
  { label: "02dtm", depth: 1, icon: "triFile", state: "closed" },
  { label: "06kontur_seam", depth: 1, icon: "triFile", state: "closed" },
  { label: "19pit_design", depth: 1, icon: "triFile", state: "closed" },
  { label: "20ultimate_pit", depth: 1, icon: "triFile", state: "open" },
  { label: "20TRI_ULTIMATE_P", depth: 2, icon: "triLayers", state: "open" },
  { label: "20TRI_ULTIMATE_", depth: 3, icon: "cone", check: false, bold: true, selected: true },
  { label: "22disposal", depth: 1, icon: "triFile", state: "open" },
  { label: "22TRI_DISPO", depth: 2, icon: "triLayers", state: "open" },
  { label: "22TRI_DISPO", depth: 3, icon: "cone", check: false },
  { label: "22TRI_DISPO2", depth: 2, icon: "triLayers", state: "open" },
  { label: "22TRI_DISPO2", depth: 3, icon: "cone", check: false },
  { label: "jalan", depth: 1, icon: "triFile", state: "open", bold: true },
  { label: "JALAN_RSB", depth: 2, icon: "triLayers", state: "open", bold: true },
  { label: "JALAN_RSB", depth: 3, icon: "cone", check: true },
  { label: "User Command", depth: 0, icon: "user" },
  { label: "Views", depth: 0, icon: "grid" },
];

const indents = ["pl-0", "pl-4", "pl-8", "pl-12"];

const TreeRow = ({ node }: { node: Node }) => (
  <li className={`flex min-h-0 flex-1 items-center ${indents[node.depth]}`}>
    <span className="flex w-[10px] shrink-0 justify-start">
      {node.state && (
        <svg viewBox="0 0 8 8" className="size-2">
          {node.state === "open" ? (
            <path d="M6 2v5H1z" fill="#222" />
          ) : (
            <path d="M2 1l4 3-4 3z" fill="#fff" stroke="#888" />
          )}
        </svg>
      )}
    </span>
    <label
      className={`flex h-full items-center whitespace-nowrap ${node.bold ? "font-bold" : ""} ${
        node.selected ? "bg-black text-white" : ""
      }`}
    >
      <span className="flex w-[17px] shrink-0 justify-center">
        <Icon name={node.icon} />
      </span>
      {node.check !== undefined && (
        <input
          type="checkbox"
          defaultChecked={node.check}
          className="relative mr-[5px] size-[11px] shrink-0 appearance-none border border-[#9b9b9b] bg-linear-to-br from-white to-[#dcdcdc] checked:before:absolute checked:before:inset-0 checked:before:text-center checked:before:text-[9px] checked:before:leading-[9px] checked:before:font-bold checked:before:content-['✕']"
        />
      )}
      {node.label}
    </label>
  </li>
);

const sections = [
  { label: "Explorer", icon: "folder" },
  { label: "Loaded Data", icon: "folderOpen" },
  { label: "Projects - Minescape Coal", icon: "project" },
  { label: "Sessions - None", icon: "people" },
  { label: "Layout - None", icon: "monitor" },
  { label: "Modules", icon: "cogs" },
];

const Sidebar = () => {
  const [open, setOpen] = useState("Explorer");
  return (
    <aside className="flex w-[181px] shrink-0 flex-col border-r border-[#5c83be] bg-[#aecdfb] font-['Liberation_Sans',sans-serif] text-[9px] text-[#1a1a1a]">
      <header className="flex h-3 shrink-0 items-center gap-[5px] bg-[#93b3e3] pr-1 pt-px text-[#16294f]">
        <Icon name="snow" className="size-2" />
        <span className="-ml-px">Navigation Bar</span>
        <PanelButtons />
      </header>
      <div className="flex h-[27px] shrink-0 items-center gap-[5px] bg-linear-to-b from-[#e8f1ff] to-[#b4d0f9] pl-[9px]">
        <Icon name="folder" className="size-4" />
        <h2 className="text-[13px] font-bold text-[#4c78b3]">Explorer</h2>
      </div>
      <div className="flex h-[26px] shrink-0 items-center border-b border-[#8db0e2] bg-linear-to-b from-[#e0ecfe] to-[#a9c8f6]">
        <span className="ml-1 mr-[3px] h-4 border-l-2 border-dotted border-[#7596cb]" />
        {["home", "back", "forwardNav", "list", "|", "glasses", "layers", "goldGear"].map((name) =>
          name === "|" ? (
            <span key={name} className="ml-[2px] mr-1 h-[18px] border-l border-[#8fb0e0]" />
          ) : (
            <button key={name} aria-label={name} className="flex w-[21px] justify-center">
              <Icon name={name} className="size-[14px]" />
            </button>
          )
        )}
        <span className="ml-auto flex h-full w-2 flex-col items-center justify-between bg-linear-to-b from-[#c8dcf8] to-[#85a8dc] py-1 text-[9px] leading-[6px] font-bold">
          »
          <svg viewBox="0 0 6 6" className="size-[6px]">
            <path d="M0 1h6M1 3h4L3 5z" fill="#111c33" stroke="#111c33" />
          </svg>
        </span>
      </div>
      <div className="flex h-[26px] shrink-0 items-center gap-1 bg-[#c4dcfd] px-[3px]">
        <span className="relative flex h-4 w-[116px] shrink-0 items-center border border-[#7c8795] bg-white pl-[2px]">
          <Icon name="pc" />
          <select aria-label="Filter" className="h-full w-full appearance-none pl-[2px] outline-none">
            <option>All</option>
            <option>Designs</option>
          </select>
          <span className="pointer-events-none absolute inset-y-0 right-0 flex w-[17px] items-center justify-center border-l border-[#8f8f8f] bg-linear-to-b from-white to-[#d6d6d6]">
            <svg viewBox="0 0 8 8" className="size-2">
              <path d="M1 2h6L4 6z" fill="#333" />
            </svg>
          </span>
        </span>
        <button className="flex h-[18px] flex-1 items-center justify-center gap-1 rounded-sm bg-[#cde1fe] pl-1 text-[#16294f]">
          Search <span className="font-bold">&gt;&gt;</span>
        </button>
      </div>
      <div className="flex min-h-0 flex-1 border-t border-[#7c8795] bg-white">
        <div className="min-w-0 flex-1 overflow-hidden">
          <ul className="-mt-[6px] flex h-[calc(100%+15px)] flex-col">
            {tree.map((node, i) => (
              <TreeRow key={i} node={node} />
            ))}
          </ul>
        </div>
        <div className="flex w-[14px] shrink-0 flex-col bg-[#efefef]">
          <ScrollButton dir="up" />
          <span className="flex-1" />
          <span className="mb-2 h-9 rounded-xs border border-[#9a9a9a] bg-linear-to-r from-white to-[#dadada]" />
          <ScrollButton dir="down" />
        </div>
      </div>
      <div className="flex h-4 shrink-0 items-center bg-[#efefef] pl-[2px] pr-4">
        <ScrollButton dir="left" />
        <span className="ml-[5px] h-[14px] w-[120px] rounded-xs border border-[#9a9a9a] bg-linear-to-b from-white to-[#d6d6d6]" />
        <span className="flex-1" />
        <ScrollButton dir="right" />
      </div>
      <div className="flex h-[5px] shrink-0 items-center justify-center border-t border-[#6f93ca] bg-[#c9defd]">
        <span className="w-4 border-t-2 border-dotted border-[#5e7fb8]" />
      </div>
      {sections.map((section) => (
        <button
          key={section.label}
          onClick={() => setOpen(section.label)}
          className={`flex h-[25px] shrink-0 items-center gap-[5px] border-b border-[#6c94cf] bg-linear-to-b pl-1 pt-[2px] font-bold ${
            open === section.label
              ? "from-[#ffd39a] via-[#ffb046] to-[#ffd27c] text-[#1c1c1c]"
              : "from-[#d0e3fe] to-[#a3c6f6] text-[#234f91]"
          }`}
        >
          <Icon name={section.icon} className="size-[14px]" />
          {section.label}
        </button>
      ))}
      <div className="h-[23px] shrink-0 border-t border-[#4c76b2]" />
    </aside>
  );
};

// chainage lines that cross the road
const crossings = [
  [1072, 180, 1258, 193],
  [975, 215, 1160, 229],
  [878, 251, 1063, 265],
  [782, 287, 968, 300],
  [685, 322, 872, 335],
  [587, 356, 774, 371],
  [491, 392, 680, 405],
  [630, 480, 806, 465],
  [743, 514, 919, 498],
];

const Viewport = () => (
  <div className="relative min-h-0 flex-1 bg-black">
    <svg
      viewBox="184 128 1076 404"
      preserveAspectRatio="none"
      className="absolute inset-0 size-full"
      role="img"
      aria-label="JALAN triangulation"
    >
      <defs>
        <linearGradient id="wall" x1="0" x2="1" y1="0" y2="0">
          <stop offset="0" stopColor="#00a2a2" />
          <stop offset=".14" stopColor="#00baba" />
        </linearGradient>
      </defs>

      {/* lower pit wall */}
      <path d="M660 414L738 392L780 411L932 474L1040 507L1135 532H1030L697 432Z" fill="#003333" />
      <path d="M738 392L780 411L932 474L1040 507L1135 532" fill="none" stroke="#6fb5ac" />

      {/* upper wall */}
      <path
        d="M432 376Q434 371 460 355L555 305L650 268L742 225L780 211L843 189L950 167L1060 151L1165 138L1172 146L487 393L448 416Z"
        fill="url(#wall)"
      />
      <path d="M948 168L840 202L742 239L640 272L555 306L650 273L742 243L840 207Z" fill="#00eded" />
      <path d="M432 378Q434 371 460 355L555 305L650 268L742 225" fill="none" stroke="#10e8e8" />
      <path d="M742 225L780 211L843 189L950 167L1060 151L1165 138" fill="none" stroke="#4fd6d2" />
      <path d="M432 376L448 416" stroke="#0bd0d0" />

      {/* road surface */}
      <path
        d="M1170 144L585 357L487 392Q440 407 449 422Q456 438 515 453L788 532H1019L700 436Q640 420 682 410L780 374L1260 199V150Z"
        fill="#00eeee"
      />
      <path d="M1260 191L682 404V410L1260 199Z" fill="#00dcdc" />
      <path d="M1172 141L1260 149L1175 148Z" fill="#006868" />
      <path d="M466 408Q462 427 520 446L632 477L745 510L820 532H800L745 516L632 482L525 450Q456 428 466 408Z" fill="#007272" />
      <path d="M672 420Q680 427 697 431L809 464L921 496L1038 532H1016L918 503L800 468L692 435Z" fill="#006f6f" />

      {/* white design strings */}
      <g fill="none" stroke="#c4ffff" strokeWidth=".8">
        <path d="M1165 143L585 355L487 391Q438 407 450 421Q458 440 512 453L780 531" strokeDasharray="3 1" />
        <path d="M1172 147L590 359L492 394Q450 406 462 424Q472 436 520 448L810 532" strokeDasharray="2 2" opacity=".7" />
        <path d="M1178 148L594 362L500 394" strokeDasharray="1 1" opacity=".7" />
        <path d="M1258 152L780 327L588 398Q536 419 590 436L712 471L935 532" strokeDasharray="1 1.500" />
        <path d="M1260 191L780 366L682 402Q642 414 666 424L700 435L1017 532" strokeDasharray="1 1" />
        <path d="M1260 199L780 375L682 410Q660 417 678 425L697 431L1036 531" strokeDasharray="2 1" />
        <path d="M1165 138L1225 147L1260 150M1172 142L1260 150M1165 138L1172 150L1180 143" stroke="#fff" />
      </g>
      <g fill="none" stroke="#7cf8f8" strokeDasharray="6 4">
        {crossings.map(([x1, y1, x2, y2]) => (
          <path key={x1} d={`M${x1} ${y1}L${x2} ${y2}`} />
        ))}
      </g>

      {/* survey ticks on both bends */}
      <g fill="none" stroke="#d8ffff">
        <path d="M490 393Q442 407 456 424Q464 439 516 451" strokeWidth="8" strokeDasharray=".6 3" />
        <path d="M488 400Q462 408 474 420Q484 435 525 444" strokeWidth="14" strokeDasharray=".4 3.600" opacity=".7" />
        <path d="M500 394L650 402" strokeWidth="4" strokeDasharray=".5 7" opacity=".7" />
        <path d="M510 444Q580 442 655 428" strokeWidth="8" strokeDasharray=".5 5" opacity=".5" />
        <path d="M668 408Q650 416 670 426L696 434" strokeWidth="4" strokeDasharray="1 1.500" stroke="#fff" />
        <path d="M680 410Q660 417 680 426" strokeWidth="4" strokeDasharray="3 1" stroke="#fff" />
        <path d="M650 408Q634 416 652 426" strokeWidth="14" strokeDasharray=".4 3" opacity=".6" />
        <path d="M452 409Q446 418 458 430M470 404Q458 415 470 430" stroke="#5c8f96" />
      </g>
      <g fill="none" stroke="#e8e0e8" strokeWidth=".8">
        {crossings.flatMap(([x1, y1, x2, y2]) => [
          <path key={`a${x1}`} d={`M${x1 - 5} ${y1 - 4}l4 4m0-4l-4 4m5 2h5m-4-2l3 3`} />,
          <path key={`b${x1}`} d={`M${x2 - 2} ${y2 - 2}l3 3m0-3l-3 3m5 2h5m-4-2l3 3`} />,
          <path
            key={`c${x1}`}
            d={`M${(x1 + x2) / 2 - 3} ${(y1 + y2) / 2}h6m-5-2l4 4`}
            stroke="#b8ffff"
          />,
        ])}
        <path d="M917 494l6 5m0-6l-6 6M1033 527l6 4m0-5l-6 5M806 461l5 5m0-5l-5 5" stroke="#fff" />
      </g>
    </svg>
    <div className="pointer-events-none absolute inset-0 border-2 border-[#0a0a8c]" />
    <svg viewBox="184 128 1076 404" preserveAspectRatio="none" className="absolute inset-0 size-full">
      {[
        [185, 129],
        [722, 129],
        [1258, 129],
        [185, 330],
        [1258, 330],
        [185, 530],
        [722, 530],
        [1258, 530],
      ].map(([x, y]) => (
        <circle key={`${x}-${y}`} cx={x} cy={y} r="1.700" fill="#000" stroke="#fff" />
      ))}
    </svg>
  </div>
);

const messages = [
  "Annotation off",
  "Open triangle set JALAN_RSB, please wait...",
  "Created reference JALAN",
  "Finish opening JALAN_RSB",
  "Snap Centre ID:2073 Vertex:1 Object:DESIGN_TMPLT X:5231.905 Y:3561.586 Z:28.511",
];

const feedbackTabs = [
  { label: "Feedback", icon: "note" },
  { label: "Tracer", icon: "tracer" },
  { label: "Snapshot", icon: "snapshot" },
];

const Feedback = () => {
  const [tab, setTab] = useState("Feedback");
  return (
    <section className="shrink-0 font-['Liberation_Sans',sans-serif] text-[9px] text-[#16294f]">
      <header className="flex h-3 items-center gap-px bg-[#93b3e3] pr-1 pt-px">
        <Icon name="note" className="size-[10px]" />
        <span>Feedback</span>
        <span className="ml-auto flex items-center gap-1">
          <PanelButtons />
        </span>
      </header>
      <div className="flex h-[98px] bg-[#e4eefc]">
        <div className="flex w-[25px] shrink-0 flex-col items-center">
          <div className="flex h-20 w-full flex-col items-center bg-linear-to-r from-[#dfebfe] to-[#b8d1f5] pt-[6px]">
            <span className="mb-[3px] w-4 border-t-2 border-dotted border-[#7596cb]" />
            {["save", "copy", "eraser"].map((name) => (
              <button key={name} aria-label={name} className="flex h-5 items-center">
                <Icon name={name} className="size-[13px]" />
              </button>
            ))}
            <span className="mt-auto flex h-[9px] w-full items-center justify-between bg-[#94b3e2] px-1">
              <svg viewBox="0 0 6 6" className="size-[6px]">
                <path d="M1 1h4M1 3h4L3 5z" fill="#111c33" stroke="#111c33" />
              </svg>
              <svg viewBox="0 0 6 6" className="size-[6px]">
                <path d="M1 0v6M3 0v6l3-3z" fill="#111c33" stroke="#111c33" />
              </svg>
            </span>
          </div>
        </div>
        <div className="mt-[2px] flex min-w-0 flex-1 flex-col border-y border-l border-[#6f8fc0] bg-white">
          <div className="flex min-h-0 flex-1">
            <ul className="min-w-0 flex-1 font-['Liberation_Mono',monospace] text-[9px] leading-[14px] text-[#23315a]">
              {messages.map((message, i) => (
                <li
                  key={message}
                  className={`flex items-center gap-[10px] whitespace-nowrap pl-[7px] ${
                    i === messages.length - 1 ? "bg-linear-to-b from-[#f2f2f2] to-[#dedede]" : ""
                  }`}
                >
                  <svg viewBox="0 0 8 8" className="size-2 shrink-0">
                    <circle cx="4" cy="4" r="4" fill="#1c6fc0" />
                    <path d="M4 1.200v1.300M4 3.200v3.500" stroke="#fff" strokeWidth="1.400" />
                  </svg>
                  {message}
                </li>
              ))}
            </ul>
            <div className="mr-[2px] flex w-[14px] shrink-0 flex-col bg-[#efefef] pt-px">
              <ScrollButton dir="up" />
              <span className="flex-1" />
              <span className="mb-px h-[7px] rounded-xs border border-[#9a9a9a] bg-white" />
              <ScrollButton dir="down" />
            </div>
          </div>
          <div className="mr-4 flex h-4 shrink-0 items-center bg-[#efefef] pl-px">
            <ScrollButton dir="left" />
            <span className="h-[14px] w-[125px] rounded-xs border border-[#9a9a9a] bg-linear-to-b from-white to-[#d6d6d6]" />
            <span className="flex-1" />
            <ScrollButton dir="right" />
          </div>
        </div>
      </div>
      <div className="flex h-4 gap-1 border-t border-[#41659f] bg-[#bfdbff]" role="tablist">
        {feedbackTabs.map(({ label, icon }) => (
          <button
            key={label}
            role="tab"
            aria-selected={tab === label}
            onClick={() => setTab(label)}
            className={`flex items-center gap-[3px] px-[3px] text-[#2a4f8c] ${tab === label ? "bg-[#eaf3ff]" : ""}`}
          >
            <Icon name={icon} className="size-[11px]" />
            {label}
          </button>
        ))}
      </div>
    </section>
  );
};

const windowTools =
  "winNew winDel winProps | winText *winPick winEdit winGlobe | winH winV | winCopy winLock winLock2 | winPhoto winGrey | toBack backward forward toFront";

const WindowStrip = () => (
  <div className="ml-[2px] flex w-[18px] shrink-0 flex-col items-center self-start bg-linear-to-r from-[#e3eefe] to-[#b3cff8]">
    <span className="my-[2px] w-3 border-t-2 border-dotted border-[#7596cb]" />
    {windowTools.split(" ").map((item, i) => {
      if (item === "|") return <span key={i} className="my-[1px] h-[2px] w-3 border-t border-[#a9c4ec] bg-[#eef5ff]" />;
      const active = item.startsWith("*");
      const name = item.replace("*", "");
      return (
        <button
          key={i}
          aria-label={name}
          className={`flex h-4 w-full items-center justify-center ${
            active ? "border border-[#c08b45] bg-linear-to-b from-[#fcd49c] to-[#ffb04a]" : ""
          }`}
        >
          <Icon name={name} />
        </button>
      );
    })}
    <span className="mt-[2px] flex h-2 w-full items-center justify-end bg-linear-to-r from-[#c8dcf8] to-[#7c9fd3] pr-[2px]">
      <svg viewBox="0 0 6 6" className="size-[6px]">
        <path d="M1 0v6M3 1v4l2-2z" fill="#111c33" stroke="#111c33" />
      </svg>
    </span>
  </div>
);

const StatusToolbars = () => (
  <div className="flex h-5 gap-px pt-px text-[11px] text-[#1c2b45]">
    <Toolbar>
      <span className="w-[31px] leading-[18px]">Status</span>
      <Combo label="Status" options={["Ready..."]} className="my-[2px] w-[202px] text-[#4b2f93]" />
    </Toolbar>
    <Toolbar>
      <span className="w-[38px] leading-[17px]">Stowed</span>
      <Combo label="Stowed" options={[""]} className="my-[2px] w-[195px]" />
    </Toolbar>
    <Toolbar>
      <span className="w-[44px] leading-[17px]">Modules</span>
      <Combo label="Modules" options={[""]} className="my-[2px] w-[189px]" />
      <Tools items="prev pause play stop | abort | save log" />
    </Toolbar>
    <Toolbar>
      <Tools items="cubeTop cubeBottom cubeLeft cubeRight cubeFront | cubeBack isoNE isoNW isoSE isoSW" />
    </Toolbar>
  </div>
);

const StatusBar = () => (
  <footer className="flex h-[19px] items-center border-b border-[#8db4e8] bg-linear-to-b from-[#dceafe] to-[#b4d3fb] pl-[15px] text-[10px] text-[#2f4f86]">
    <span className="w-[147px] whitespace-pre">12021.632,  1310.584,  -1111.687</span>
    <span className="mr-2 h-3 border-l border-[#9dbbe6]" />
    <span className="w-11">Viewport:</span>
    <Combo label="Viewport" options={["MAIN", "PLAN"]} className="h-[14px] w-[83px] text-black" />
    <span className="ml-3 w-[38px] whitespace-nowrap">Scale 1 :</span>
    <Combo label="Scale" options={["260", "500", "1000"]} className="h-[14px] w-[66px] text-black" />
    <span className="ml-[14px] w-10 whitespace-nowrap">Active Z:</span>
    <Combo label="Active Z" options={["0.000"]} className="h-[14px] w-[66px] text-black" />
    <span className="ml-[5px] mr-[7px] h-3 border-l border-[#9dbbe6]" />
    <span>Selected: 0</span>
  </footer>
);

const App = () => {
  return (
    <div className="h-screen bg-black py-5">
      <div className="flex h-full flex-col overflow-hidden bg-[#bfdbff] font-['Roboto',sans-serif]">
        <header className="flex h-[19px] shrink-0 items-center bg-[#eef8dc] pl-[2px] pr-4">
          <Icon name="mine" />
          <h1 className="ml-1 flex-1 text-[10px] text-[#222]">MineScape 5.7 - Minescape Coal</h1>
          <div className="flex gap-[29px] text-[#222]">
            <button aria-label="Minimize">
              <svg viewBox="0 0 10 10" className="size-[10px]">
                <path d="M1 5h8" stroke="#777" />
              </svg>
            </button>
            <button aria-label="Restore">
              <svg viewBox="0 0 10 10" className="size-[10px]" fill="none" stroke="#222">
                <path d="M1.500 3h5.500v5.500H1.500zM3 3V1.500h5.500V7H7" />
              </svg>
            </button>
            <button aria-label="Close">
              <svg viewBox="0 0 10 10" className="size-[10px]">
                <path d="M1 1l8 8M9 1L1 9" stroke="#222" />
              </svg>
            </button>
          </div>
        </header>
        <MenuBar />
        <Toolbars />
        <div className="flex min-h-0 flex-1">
          <Sidebar />
          <main className="ml-[3px] flex min-w-0 flex-1 flex-col">
            <div className="flex h-[18px] shrink-0 items-center pl-[2px] pr-[3px] pt-[2px]">
              <button className="flex h-4 items-center gap-px rounded-t-sm bg-[#eaf3ff] pl-px pr-1 font-['Liberation_Sans',sans-serif] text-[9px] text-[#2a4f8c]">
                <Icon name="tabIcon" />
                JALAN
              </button>
              <button aria-label="Close tab" className="ml-auto">
                <svg viewBox="0 0 8 8" className="size-[7px]">
                  <path d="M1 1l6 6M7 1L1 7" stroke="#14306f" strokeWidth="1.800" />
                </svg>
              </button>
            </div>
            <Viewport />
            <div className="h-[3px] shrink-0 border-b border-[#4c70aa] bg-[#b5d0f7]" />
            <Feedback />
          </main>
          <WindowStrip />
        </div>
        <StatusToolbars />
        <StatusBar />
      </div>
    </div>
  );
};

export default App;
